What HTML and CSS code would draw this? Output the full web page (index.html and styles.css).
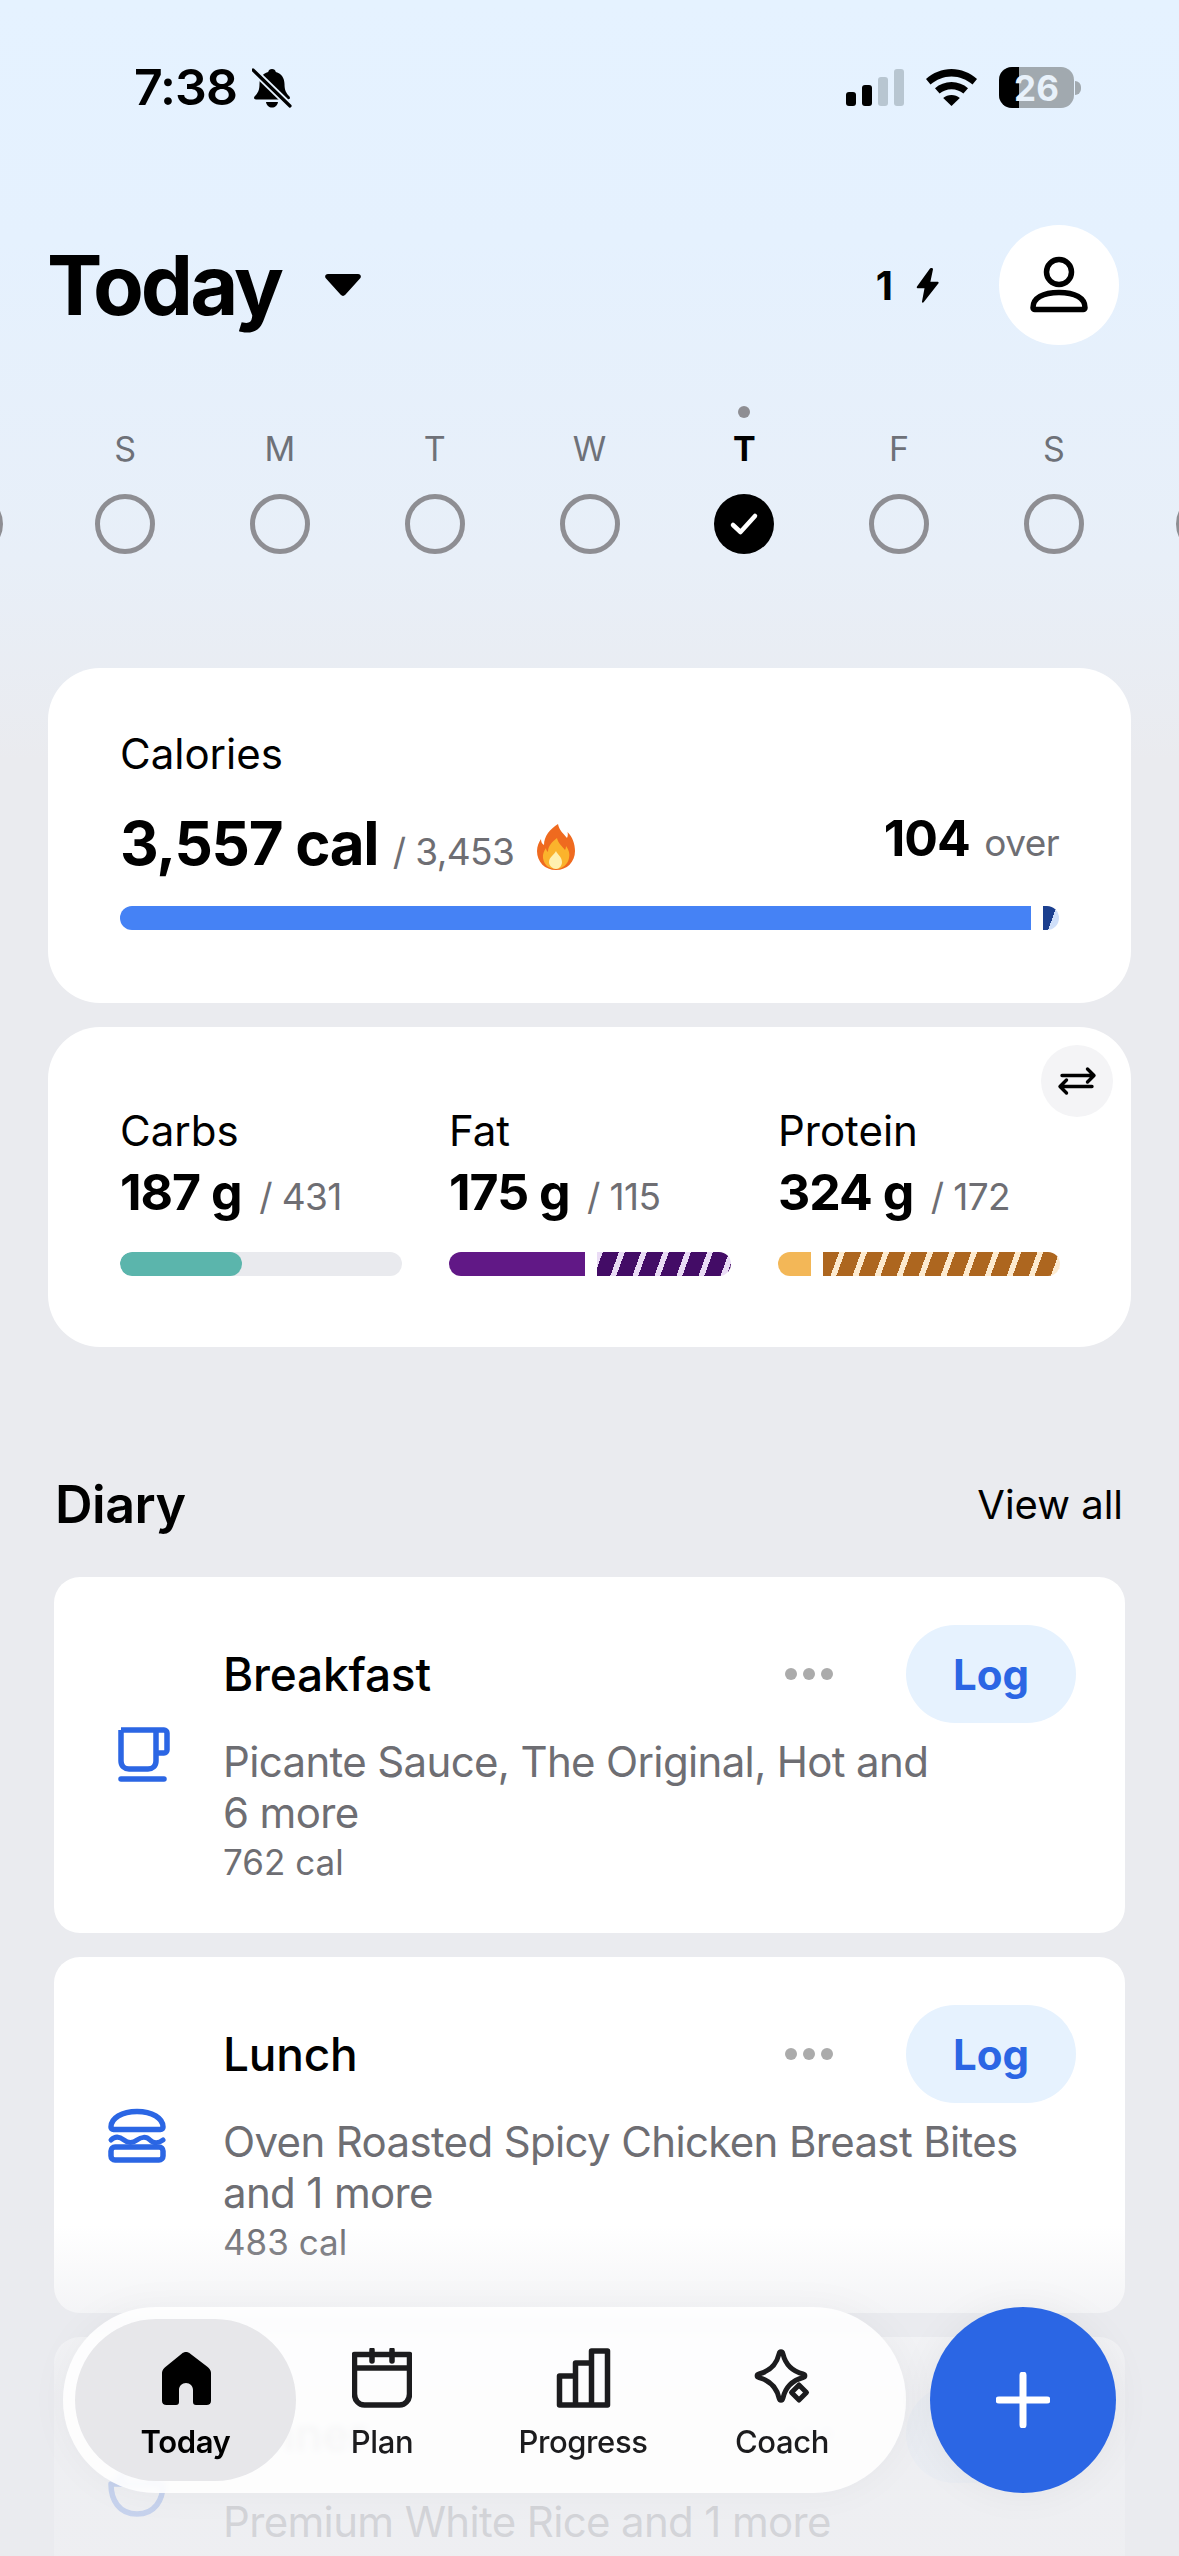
FILE: index.html
```html
<!DOCTYPE html>
<html lang="en">
<head>
    <meta charset="UTF-8">
    <meta name="viewport" content="width=device-width, initial-scale=1.0">
    <title>Today</title>
    <link rel="stylesheet" href="styles.css">
</head>
<body>
    <div class="status-bar">
        <div class="status-left">
            <span class="status-time">7:38</span>
            <svg class="bell" width="40" height="40" viewBox="0 0 40 40">
                <path d="M20 1c2 0 3.500 1.300 3.800 3 6 1.500 8.700 6.500 8.700 12 0 6 1.500 9 5 12.500 1 1.300.3 3-1.500 3H4c-1.800 0-2.500-1.700-1.500-3C6 25 7.500 22 7.500 16c0-5.500 2.700-10.500 8.700-12C16.500 2.300 18 1 20 1z"/>
                <path d="M14 34h12c-.5 3.500-3 5.500-6 5.500S14.500 37.500 14 34z"/>
                <path d="M1 2l37 36" stroke="#e5f2ff" stroke-width="7"/>
                <path d="M1 2l37 36" stroke="#000" stroke-width="3.200" stroke-linecap="round"/>
            </svg>
        </div>
        <div class="status-right">
            <div class="signal">
                <span class="signal-bar signal-1"></span>
                <span class="signal-bar signal-2"></span>
                <span class="signal-bar signal-3"></span>
                <span class="signal-bar signal-4"></span>
            </div>
            <svg class="wifi" width="51" height="37" viewBox="0 0 51 37">
                <path d="M25.500 0C35 0 44 3.700 51 10l-4.500 5.500C40.500 10.500 33.500 7.500 25.500 7.500S10.500 10.500 4.500 15.500L0 10C7 3.700 16 0 25.500 0z"/>
                <path d="M25.500 13c6.300 0 12 2.300 16.500 6.200l-4.600 5.300c-3.300-2.700-7.300-4.300-11.900-4.300s-8.600 1.600-11.900 4.300L9 19.200C13.500 15.300 19.200 13 25.500 13z"/>
                <path d="M25.500 26c3.200 0 6 1 8.300 2.900L25.500 37l-8.300-8.100C19.500 27 22.300 26 25.500 26z"/>
            </svg>
            <div class="battery">
                <div class="battery-body">
                    <span class="battery-fill"></span>
                    <span class="battery-level">26</span>
                </div>
                <span class="battery-tip"></span>
            </div>
        </div>
    </div>

    <header class="top-bar">
        <h1 class="page-title">Today</h1>
        <svg class="title-caret" width="36" height="22" viewBox="0 0 36 22">
            <path d="M3 0h30c2.500 0 3.700 2.500 2.200 4.300L20.300 20.800c-1.300 1.500-3.300 1.500-4.600 0L.8 4.300C-.7 2.500.5 0 3 0z"/>
        </svg>
        <div class="streak">
            <span>1</span>
            <svg width="24" height="35" viewBox="0 0 24 35">
                <path d="M15 0.500L2 18.500c-.6.9-.1 1.800 1 1.800h6.500L7 33.500c-.2 1.200.9 1.700 1.600.8l14.700-18.800c.7-.9.200-1.800-.9-1.800h-7L18 1.200c.2-1.200-2.200-1.700-3-.7z"/>
            </svg>
        </div>
        <div class="avatar">
            <svg width="60" height="60" viewBox="0 0 60 60">
                <circle cx="30" cy="17" r="12.500" fill="none" stroke="#000" stroke-width="5.500"/>
                <path d="M5.800 54.500c-1 0-1.800-.8-1.800-1.800C4 43 14 37.500 30 37.500S56 43 56 52.700c0 1-.8 1.800-1.800 1.800z" fill="none" stroke="#000" stroke-width="5.500" stroke-linejoin="round"/>
            </svg>
        </div>
    </header>

    <div class="week">
        <div class="day"><span class="day-dot"></span><span class="day-letter"></span><span class="day-ring"></span></div>
        <div class="day"><span class="day-dot"></span><span class="day-letter">S</span><span class="day-ring"></span></div>
        <div class="day"><span class="day-dot"></span><span class="day-letter">M</span><span class="day-ring"></span></div>
        <div class="day"><span class="day-dot"></span><span class="day-letter">T</span><span class="day-ring"></span></div>
        <div class="day"><span class="day-dot"></span><span class="day-letter">W</span><span class="day-ring"></span></div>
        <div class="day day-current">
            <span class="day-dot"></span>
            <span class="day-letter">T</span>
            <span class="day-check">
                <svg width="30" height="24" viewBox="0 0 30 24">
                    <path d="M4 13l7.500 7L26 4" fill="none" stroke="#fff" stroke-width="4.500" stroke-linecap="round" stroke-linejoin="round"/>
                </svg>
            </span>
        </div>
        <div class="day"><span class="day-dot"></span><span class="day-letter">F</span><span class="day-ring"></span></div>
        <div class="day"><span class="day-dot"></span><span class="day-letter">S</span><span class="day-ring"></span></div>
        <div class="day"><span class="day-dot"></span><span class="day-letter"></span><span class="day-ring"></span></div>
    </div>

    <section class="card calories-card">
        <div class="card-label">Calories</div>
        <div class="calories-row">
            <div class="calories-total">
                <span class="big-number">3,557 cal</span>
                <span class="goal">/ 3,453</span>
                <svg class="flame" width="38" height="46" viewBox="0 0 38 46">
                    <path d="M21 0c1 6 5 9 9 14 1-2 1-4 .5-6 5 5 7.500 12 7.500 19 0 11-8 19-19 19S0 38 0 27c0-5 2-9 4-12 0 3 1 5 3 6C7 12 13 5 21 0z" fill="#ef6a1f"/>
                    <path d="M20 14c1 5 5 8 8 12 .5-1 1-2 1-4 3 4 4 8 3 12-1 6-6 11-13 11S7 41 6 34c-.5-4 1-7 3-10 0 2 1 3 2 4 0-6 4-10 9-14z" fill="#fbb32c"/>
                    <path d="M19 27c1 3 6 6 6 11 0 4-3 7-6 7s-7-3-7-7c0-5 5-7 7-11z" fill="#fff0b0"/>
                </svg>
            </div>
            <div class="calories-over">
                <span class="over-number">104</span>
                <span class="goal">over</span>
            </div>
        </div>
        <div class="bar">
            <span class="bar-part bar-blue" style="width: 911px"></span>
            <span class="bar-part stripes-blue" style="width: 16px"></span>
        </div>
    </section>

    <section class="card macros-card">
        <button class="swap-button">
            <svg width="40" height="30" viewBox="0 0 40 30">
                <path d="M5 9.500h32M30.500 3l6.500 6.500-6.500 6.500" fill="none" stroke="#000" stroke-width="3.400" stroke-linecap="round" stroke-linejoin="round"/>
                <path d="M35 20.500H3M9.500 14L3 20.500 9.500 27" fill="none" stroke="#000" stroke-width="3.400" stroke-linecap="round" stroke-linejoin="round"/>
            </svg>
        </button>
        <div class="macro">
            <div class="card-label">Carbs</div>
            <div class="macro-value"><span class="over-number">187 g</span> <span class="goal">/ 431</span></div>
            <div class="bar bar-track">
                <span class="bar-part bar-teal" style="width: 122px"></span>
            </div>
        </div>
        <div class="macro">
            <div class="card-label">Fat</div>
            <div class="macro-value"><span class="over-number">175 g</span> <span class="goal">/ 115</span></div>
            <div class="bar">
                <span class="bar-part bar-purple" style="width: 136px"></span>
                <span class="bar-part stripes-purple" style="width: 134px"></span>
            </div>
        </div>
        <div class="macro">
            <div class="card-label">Protein</div>
            <div class="macro-value"><span class="over-number">324 g</span> <span class="goal">/ 172</span></div>
            <div class="bar">
                <span class="bar-part bar-orange" style="width: 33px"></span>
                <span class="bar-part stripes-orange" style="width: 237px"></span>
            </div>
        </div>
    </section>

    <div class="diary-head">
        <h2 class="diary-title">Diary</h2>
        <span class="view-all">View all</span>
    </div>

    <section class="meal">
        <svg class="meal-icon" width="66" height="56" viewBox="0 0 66 56">
            <path d="M16 3h43c1.700 0 3 1.300 3 3v17c0 1.700-1.300 3-3 3h-8M16 3v31c0 5 3.500 8 8 8h19c4.500 0 8-3 8-8V3" fill="none" stroke="#2b66e4" stroke-width="5.500" stroke-linejoin="round"/>
            <path d="M16 52h43" fill="none" stroke="#2b66e4" stroke-width="5.500" stroke-linecap="round"/>
        </svg>
        <div class="meal-body">
            <div class="meal-top">
                <span class="meal-name">Breakfast</span>
                <span class="meal-dots"><i></i><i></i><i></i></span>
                <button class="log-button">Log</button>
            </div>
            <div class="meal-foods">Picante Sauce, The Original, Hot and<br>6 more</div>
            <div class="meal-cal">762 cal</div>
        </div>
    </section>

    <section class="meal">
        <svg class="meal-icon" width="66" height="56" viewBox="0 0 66 56">
            <path d="M6 20c0-9 11-15.500 26-15.500S58 11 58 20c0 1.500-1 2.500-2.500 2.500h-47C7 22.500 6 21.500 6 20z" fill="none" stroke="#2b66e4" stroke-width="5.500" stroke-linejoin="round"/>
            <path d="M6 33c4-4 8-4 13 0s9 3 13 0 9-4 13 0 9 3 13 0" fill="none" stroke="#2b66e4" stroke-width="5" stroke-linecap="round"/>
            <rect x="6" y="40" width="52" height="13" rx="4" fill="none" stroke="#2b66e4" stroke-width="5.500"/>
        </svg>
        <div class="meal-body">
            <div class="meal-top">
                <span class="meal-name">Lunch</span>
                <span class="meal-dots"><i></i><i></i><i></i></span>
                <button class="log-button">Log</button>
            </div>
            <div class="meal-foods">Oven Roasted Spicy Chicken Breast Bites<br>and 1 more</div>
            <div class="meal-cal">483 cal</div>
        </div>
    </section>

    <section class="meal meal-short">
        <svg class="meal-icon" width="66" height="56" viewBox="0 0 66 56">
            <path d="M6 22h52c0 16-8 30-26 30S6 38 6 22z" fill="none" stroke="#2b66e4" stroke-width="5.500" stroke-linejoin="round"/>
            <path d="M14 22c0-9 8-16 18-16s18 7 18 16" fill="none" stroke="#2b66e4" stroke-width="5.500"/>
        </svg>
        <div class="meal-body">
            <div class="meal-top">
                <span class="meal-name">Dinner</span>
                <span class="meal-dots"><i></i><i></i><i></i></span>
                <button class="log-button">Log</button>
            </div>
            <div class="meal-foods">Premium White Rice and 1 more</div>
        </div>
    </section>

    <div class="bottom-fade"></div>

    <nav class="tab-bar">
        <div class="tab tab-active">
            <svg width="60" height="60" viewBox="0 0 60 60">
                <path d="M26 5.500c2.300-2 5.700-2 8 0l17 13c2 1.700 4 3.600 4 6.300V53c0 2.700-1.800 4-4.500 4H40c-2 0-3-1.300-3-3V42c0-4-3-7-7-7s-7 3-7 7v12c0 1.700-1 3-3 3h-9.500C7.800 57 6 55.700 6 53V24.800c0-2.700 2-4.600 4-6.300z"/>
            </svg>
            <span class="tab-label">Today</span>
        </div>
        <div class="tab">
            <svg width="60" height="60" viewBox="0 0 60 60">
                <path d="M2.500 6.500h55V46c0 6-4 11-10 11h-35c-6 0-10-5-10-11zM2.500 20h55" fill="none" stroke="#1c1c1e" stroke-width="5.500" stroke-linejoin="round"/>
                <path d="M20 2v11M40 2v11" fill="none" stroke="#1c1c1e" stroke-width="5.500" stroke-linecap="round"/>
            </svg>
            <span class="tab-label">Plan</span>
        </div>
        <div class="tab">
            <svg width="60" height="60" viewBox="0 0 60 60">
                <path d="M6.500 28h16v29h-16zM22.500 15h16v42h-16zM38.500 3h16v54h-16z" fill="none" stroke="#1c1c1e" stroke-width="5.500" stroke-linejoin="round"/>
            </svg>
            <span class="tab-label">Progress</span>
        </div>
        <div class="tab">
            <svg width="60" height="60" viewBox="0 0 60 60">
                <path d="M27 6c.7-3 3.300-3 4 0 2.500 10.500 8.500 17 20 20 2.500.7 2.500 3 0 3.700-11.500 3-17.500 9.500-20 20.300-.7 3-3.300 3-4 0-2.500-10.800-8.500-17.300-20-20.300-2.500-.7-2.500-3 0-3.700C18.500 23 24.500 16.500 27 6z" fill="none" stroke="#1c1c1e" stroke-width="5" stroke-linejoin="round"/>
                <path d="M47 37l7.500 7.500L47 52l-7.500-7.500z" fill="none" stroke="#1c1c1e" stroke-width="5" stroke-linejoin="round"/>
            </svg>
            <span class="tab-label">Coach</span>
        </div>
    </nav>

    <button class="add-button">
        <svg width="54" height="56" viewBox="0 0 54 56">
            <path d="M27 3v50M3 28h48" fill="none" stroke="#fff" stroke-width="7" stroke-linecap="round"/>
        </svg>
    </button>
</body>
</html>
```

FILE: styles.css
```css
* {
    margin: 0;
    padding: 0;
    box-sizing: border-box;
}

html {
    overflow: hidden;
    background-color: #eaebef;
}

body {
    position: relative;
    width: 1179px;
    height: 2556px;
    overflow: hidden;
    padding-top: 67px;
    background: linear-gradient(#e5f2ff 0, #e5f1fe 240px, #e8eff8 560px, #eaebef 760px);
    color: #000;
    font-family: Inter, "Liberation Sans", sans-serif;
}

button {
    border: none;
    font-family: inherit;
    cursor: pointer;
}

/* Status bar */
.status-bar {
    display: flex;
    justify-content: space-between;
    align-items: center;
    height: 41px;
    padding: 0 98px 0 134px;
}

.status-left,
.status-right {
    display: flex;
    align-items: center;
}

.status-time {
    font-size: 50px;
    font-weight: 600;
    letter-spacing: -1px;
    line-height: 41px;
}

.bell {
    margin-left: 15px;
}

.signal {
    display: flex;
    align-items: flex-end;
    gap: 6px;
    height: 37px;
}

.signal-bar {
    width: 10px;
    background-color: #000;
    border-radius: 3px;
}

.signal-1 { height: 14px; }
.signal-2 { height: 21px; }
.signal-3 { height: 29px; background-color: #b8c6d1; }
.signal-4 { height: 37px; background-color: #b8c6d1; }

.wifi {
    margin-left: 22px;
}

.battery {
    display: flex;
    align-items: center;
    margin-left: 22px;
}

.battery-body {
    position: relative;
    display: flex;
    justify-content: center;
    align-items: center;
    width: 75px;
    height: 41px;
    overflow: hidden;
    background-color: #a1a9af;
    border-radius: 13px;
}

.battery-fill {
    position: absolute;
    left: 0;
    top: 0;
    bottom: 0;
    width: 20px;
    background-color: #000;
}

.battery-level {
    position: relative;
    color: #e8f1fa;
    font-size: 35px;
    font-weight: 700;
}

.battery-tip {
    width: 6px;
    height: 14px;
    margin-left: 1px;
    background-color: #a1a9af;
    border-radius: 0 7px 7px 0;
}

/* Title row */
.top-bar {
    display: flex;
    align-items: center;
    height: 120px;
    margin-top: 117px;
    padding: 0 60px 0 47px;
}

.page-title {
    font-size: 83px;
    font-weight: 700;
    letter-spacing: -3px;
    line-height: 100px;
}

.title-caret {
    margin-left: 44px;
}

.streak {
    display: flex;
    align-items: center;
    gap: 22px;
    margin-left: auto;
    font-size: 40px;
    font-weight: 700;
}

.avatar {
    display: flex;
    justify-content: center;
    align-items: center;
    width: 120px;
    height: 120px;
    margin-left: 60px;
    background-color: #fff;
    border-radius: 50%;
}

/* Week strip */
.week {
    display: flex;
    justify-content: center;
    margin-top: 61px;
}

.day {
    display: flex;
    flex-direction: column;
    align-items: center;
    flex: 0 0 154.800px;
}

.day-dot {
    width: 12px;
    height: 12px;
    margin-bottom: 11px;
    border-radius: 50%;
}

.day-current .day-dot {
    background-color: #8e8e93;
}

.day-letter {
    height: 40px;
    margin-bottom: 25px;
    color: #6e7178;
    font-size: 34px;
    line-height: 40px;
}

.day-current .day-letter {
    color: #000;
    font-weight: 700;
}

.day-ring {
    width: 60px;
    height: 60px;
    border: 5px solid #8e8e93;
    border-radius: 50%;
}

/* the neighbouring weeks just peek in at the screen edges */
.day:first-child .day-ring {
    margin-right: -6px;
}

.day:last-child .day-ring {
    margin-left: -6px;
}

.day-check {
    display: flex;
    justify-content: center;
    align-items: center;
    width: 60px;
    height: 60px;
    background-color: #000;
    border-radius: 50%;
}

/* Summary cards */
.card {
    margin: 0 48px;
    background-color: #fff;
    border-radius: 52px;
}

.calories-card {
    height: 335px;
    margin-top: 114px;
    padding: 63px 72px 0;
}

.card-label {
    font-size: 42px;
    line-height: 46px;
}

.calories-row {
    display: flex;
    justify-content: space-between;
    align-items: flex-start;
    height: 64px;
    margin-top: 34px;
}

.calories-total {
    line-height: 64px;
}

.calories-over {
    line-height: 55px;
}

.big-number {
    font-size: 60px;
    font-weight: 700;
    letter-spacing: -1.300px;
}

.goal {
    margin-left: 10px;
    color: #6e6e73;
    font-size: 37px;
    letter-spacing: -.6px;
}

.flame {
    margin-left: 18px;
    vertical-align: -5px;
}

.over-number {
    font-size: 50px;
    font-weight: 700;
    letter-spacing: -1px;
}

.bar {
    display: flex;
    gap: 12px;
    height: 24px;
    overflow: hidden;
    border-radius: 12px;
}

.calories-card .bar {
    margin-top: 31px;
}

.bar-part {
    height: 24px;
}

.bar-blue { background-color: #4582f5; }
.bar-teal { background-color: #5bb5ac; border-radius: 12px; }
.bar-purple { background-color: #611886; }
.bar-orange { background-color: #f3b757; }
.bar-track { background-color: #e9eaee; }

.stripes-blue {
    background: linear-gradient(110deg, #1b3f8f 13px, #cfdff9 13px);
}

.stripes-purple {
    background: repeating-linear-gradient(110deg, #eadcf5 0 5.500px, #430c66 5.500px 20.700px);
}

.stripes-orange {
    background: repeating-linear-gradient(110deg, #ad661f 0 15.200px, #fdebd0 15.200px 20.700px);
}

.macros-card {
    position: relative;
    display: grid;
    grid-template-columns: repeat(3, 282px);
    column-gap: 47px;
    height: 320px;
    margin-top: 24px;
    padding: 81px 71px 0 72px;
}

.swap-button {
    position: absolute;
    top: 18px;
    right: 18px;
    display: flex;
    justify-content: center;
    align-items: center;
    width: 72px;
    height: 72px;
    background-color: #f4f4f6;
    border-radius: 50%;
}

.macro-value {
    height: 60px;
    margin-top: 8px;
    margin-bottom: 30px;
    line-height: 60px;
    white-space: nowrap;
}

.macro-value .goal {
    margin-left: 13px;
}

/* Diary */
.diary-head {
    display: flex;
    justify-content: space-between;
    align-items: center;
    height: 60px;
    margin-top: 127px;
    padding: 0 56px 0 55px;
}

.diary-title {
    font-size: 52px;
    font-weight: 600;
    letter-spacing: -.5px;
}

.view-all {
    font-size: 40px;
}

.meal {
    display: flex;
    align-items: center;
    height: 356px;
    margin: 0 54px 24px;
    padding: 0 49px 0 51px;
    background-color: #fff;
    border-radius: 26px;
}

.meal-short {
    height: 305px;
}

.diary-head + .meal {
    margin-top: 43px;
}

.meal-icon {
    flex: none;
    margin-right: 52px;
}

.meal-body {
    flex: 1;
    align-self: stretch;
    padding-top: 48px;
}

.meal-top {
    display: flex;
    align-items: center;
    height: 98px;
}

.meal-name {
    font-size: 46px;
    font-weight: 500;
    letter-spacing: -.2px;
}

.meal-dots {
    display: flex;
    gap: 6px;
    margin: 0 73px 0 auto;
}

.meal-dots i {
    width: 12px;
    height: 12px;
    background-color: #ababab;
    border-radius: 50%;
}

.log-button {
    width: 170px;
    height: 98px;
    background-color: #e6f2fe;
    border-radius: 49px;
    color: #2b66e4;
    font-size: 42px;
    font-weight: 700;
}

.meal-foods {
    margin-top: 13px;
    color: #6e6e73;
    font-size: 42px;
    letter-spacing: -.65px;
    line-height: 51px;
}

.meal-cal {
    margin-top: 3px;
    color: #6e6e73;
    font-size: 35px;
    line-height: 42px;
}

/* Bottom area */
.bottom-fade {
    position: absolute;
    left: 0;
    right: 0;
    top: 2225px;
    bottom: 0;
    background: linear-gradient(rgba(234, 235, 239, 0), rgba(234, 235, 239, .55) 90px, rgba(234, 235, 239, .8) 170px, rgba(234, 235, 239, .82));
}

.tab-bar {
    position: absolute;
    left: 63px;
    top: 2307px;
    display: grid;
    grid-template-columns: 221px 172px 230px 168px;
    width: 843px;
    height: 186px;
    padding: 12px;
    background-color: rgba(255, 255, 255, .86);
    backdrop-filter: blur(3px);
    border-radius: 93px;
    box-shadow: 0 0 40px rgba(0, 0, 0, .04);
}

.tab {
    display: flex;
    flex-direction: column;
    align-items: center;
    height: 162px;
    padding-top: 29px;
    border-radius: 81px;
}

.tab-active {
    background-color: #e7e7ea;
}

.tab-label {
    margin-top: 14px;
    color: #1c1c1e;
    font-size: 31px;
    font-weight: 500;
    line-height: 40px;
    letter-spacing: -.4px;
}

.tab-active .tab-label {
    color: #000;
    font-weight: 600;
}

.add-button {
    position: absolute;
    left: 930px;
    top: 2307px;
    display: flex;
    justify-content: center;
    align-items: center;
    width: 186px;
    height: 186px;
    background-color: #2b66e4;
    border-radius: 50%;
    box-shadow: 0 0 40px rgba(0, 0, 0, .05);
}
```
